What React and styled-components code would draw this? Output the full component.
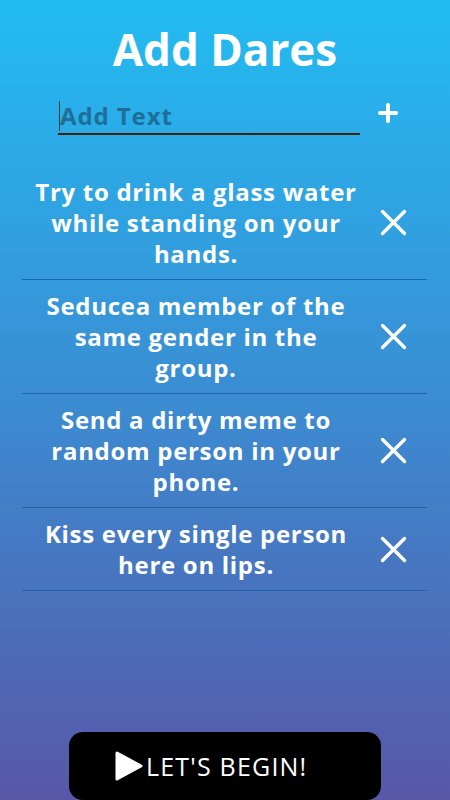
import React from "react";
import styled, { createGlobalStyle } from "styled-components";

const GlobalStyle = createGlobalStyle`
  html, body { margin: 0; padding: 0; }
  body { font-family: "Open Sans", "Liberation Sans", sans-serif; }
  * { box-sizing: border-box; }
`;

const Screen = styled.div`
  width: 450px;
  height: 800px;
  display: flex;
  flex-direction: column;
  background: linear-gradient(to bottom, #22bcf2 0%, #3b8cd2 50%, #5857a8 100%);
  overflow: hidden;
`;

const Title = styled.h1`
  margin: 23px 0 0;
  font-size: 44px;
  line-height: 53px;
  font-weight: 700;
  color: #fff;
  text-align: center;
`;

const InputRow = styled.div`
  display: flex;
  align-items: center;
  margin-top: 21px;
  padding-left: 58px;
`;

const InputWrap = styled.div`
  position: relative;
`;

const TextInput = styled.input`
  width: 302px;
  height: 38px;
  border: none;
  border-bottom: 2px solid #4a1c10;
  background: transparent;
  outline: none;
  padding: 0 0 0 2px;
  font-family: inherit;
  font-size: 24px;
  font-weight: 700;
  letter-spacing: 0.9px;
  color: #fff;
  caret-color: #333;
  &::placeholder { color: #1e6e98; opacity: 1; }
`;

const Caret = styled.span`
  position: absolute;
  left: 1px;
  top: 4px;
  width: 1px;
  height: 30px;
  background: #3a3a3a;
`;

const AddButton = styled.button`
  margin-left: 14px;
  margin-top: -6px;
  width: 27px;
  height: 27px;
  padding: 0;
  border: none;
  background: transparent;
  display: flex;
  align-items: center;
  justify-content: center;
`;

const List = styled.div`
  margin-top: 31px;
  padding: 0 23px 0 22px;
`;

const Row = styled.div`
  display: flex;
  align-items: center;
  padding: 10px 0 10px;
  border-bottom: 1px solid #2563a8;
`;

const DareText = styled.div`
  flex: 1;
  text-align: center;
  color: #fff;
  font-size: 24px;
  line-height: 31px;
  font-weight: 700;
  letter-spacing: 0.7px;
  padding: 0 12px;
`;

const RemoveButton = styled.button`
  width: 57px;
  align-self: stretch;
  border: none;
  background: transparent;
  padding: 0 10px 0 0;
  display: flex;
  align-items: center;
  justify-content: center;
`;

const Footer = styled.div`
  margin-top: auto;
  display: flex;
  justify-content: center;
`;

const BeginButton = styled.button`
  width: 312px;
  height: 68px;
  border: none;
  border-radius: 14px;
  background: #000;
  color: #fff;
  display: flex;
  align-items: center;
  padding: 0 0 0 46px;
  gap: 3px;
  font-family: inherit;
  font-size: 25px;
  font-weight: 500;
  letter-spacing: 1.2px;
`;

const PlusIcon = () => (
  <svg width="20" height="20" viewBox="0 0 20 20">
    <path d="M10 2v16M2 10h16" stroke="#fff" strokeWidth="4" strokeLinecap="round" />
  </svg>
);

const CloseIcon = () => (
  <svg width="27" height="27" viewBox="0 0 27 27">
    <path d="M2.5 2.5l22 22M24.5 2.5l-22 22" stroke="#fff" strokeWidth="3.4" strokeLinecap="round" />
  </svg>
);

const PlayIcon = () => (
  <svg width="28" height="32" viewBox="0 0 28 32">
    <path d="M2 3 L26 16 L2 29 Z" fill="#fff" stroke="#fff" strokeWidth="3" strokeLinejoin="round" />
  </svg>
);

const dares = [
  "Try to drink a glass water while standing on your hands.",
  "Seducea member of the same gender in the group.",
  "Send a dirty meme to random person in your phone.",
  "Kiss every single person here on lips.",
];

export default function App() {
  return (
    <>
      <GlobalStyle />
      <Screen>
        <Title>Add Dares</Title>
        <InputRow>
          <InputWrap>
            <TextInput placeholder="Add Text" />
            <Caret />
          </InputWrap>
          <AddButton aria-label="add">
            <PlusIcon />
          </AddButton>
        </InputRow>
        <List>
          {dares.map((d) => (
            <Row key={d}>
              <DareText>{d}</DareText>
              <RemoveButton aria-label="remove">
                <CloseIcon />
              </RemoveButton>
            </Row>
          ))}
        </List>
        <Footer>
          <BeginButton>
            <PlayIcon />
            LET'S BEGIN!
          </BeginButton>
        </Footer>
      </Screen>
    </>
  );
}
